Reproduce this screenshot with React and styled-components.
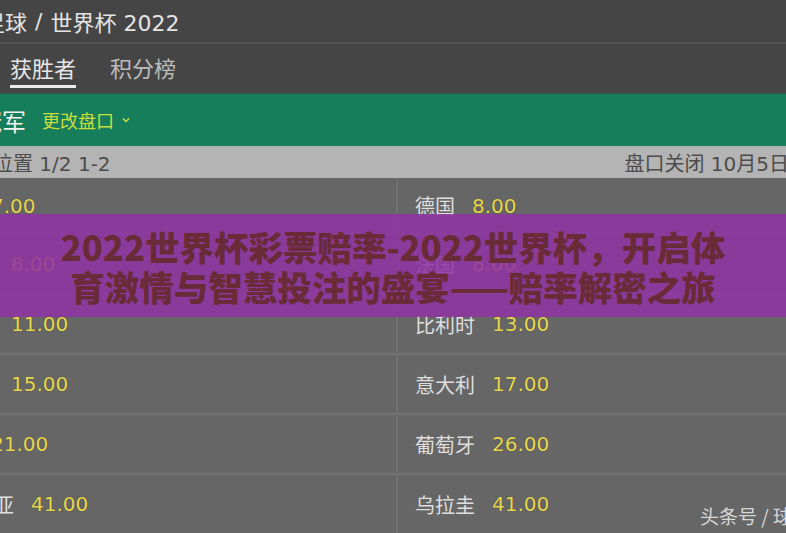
import React from 'react';
import styled, { createGlobalStyle } from 'styled-components';

const GlobalStyle = createGlobalStyle`
body {
    margin: 0;
    background: #666;
    overflow: hidden;
}
`

const Frame = styled.div`
position: relative;
width: 786px;
height: 533px;
overflow: hidden;
background-color: #666;
font-family: "DejaVu Sans", "Noto Sans CJK SC", sans-serif;
`

// a tela e mais larga que a janela, as bordas ficam cortadas
const Board = styled.div`
margin-left: -83px;
width: 889px;
`

const TopBar = styled.div`
display: flex;
align-items: center;
height: 42px;
padding-left: 66px;
background-color: #454545;
border-bottom: 2px solid #525252;
color: #e4e4e4;
font-size: 22px;
white-space: nowrap;

span {
    margin: 0 8px;
}
`

const Tabs = styled.div`
display: flex;
align-items: flex-start;
gap: 34px;
height: 49px;
padding-left: 93px;
background-color: #454545;
box-sizing: border-box;
`

const Tab = styled.div`
display: flex;
align-items: center;
height: 44px;
padding-top: 4px;
box-sizing: border-box;
font-family: "Noto Sans CJK SC", sans-serif;
font-size: 22px;
color: ${props => props.ativo ? '#e6e6e6' : '#bcbcbc'};
border-bottom: 3px solid ${props => props.ativo ? '#ececec' : 'transparent'};
`

const GreenBar = styled.div`
display: flex;
align-items: center;
gap: 16px;
height: 52px;
padding-left: 61px;
background-color: #177e5c;
border-top: 1px solid #2d5c48;
font-family: "Noto Sans CJK SC", sans-serif;
`

const Titulo = styled.div`
font-size: 24px;
color: #f2f2f2;
`

const MudarLinha = styled.div`
display: flex;
align-items: center;
gap: 8px;
font-size: 18px;
color: #c9de3e;
`

const InfoBar = styled.div`
display: flex;
justify-content: space-between;
align-items: center;
height: 32px;
padding: 0 17px 0 36px;
background-color: #b4b4b4;
color: #4c4c4c;
font-size: 20px;
white-space: nowrap;
`

const Linha = styled.div`
display: grid;
grid-template-columns: 481px 1fr;
height: 60px;
border-top: 2px solid #727272;
box-sizing: border-box;

&:first-child {
    height: 55px;
    border-top: none;
}
`

const Celula = styled.div`
display: flex;
align-items: center;
gap: 17px;
padding-left: 17px;
border-right: ${props => props.esquerda ? '2px solid #707070' : 'none'};
white-space: nowrap;
`

const Nome = styled.span`
font-family: "Noto Sans CJK SC", sans-serif;
font-size: 20px;
color: #dedede;
`

const Odd = styled.span`
font-size: 20px;
color: #e6d752;
text-shadow: 0 0 1px rgba(60, 50, 0, 0.7);
`

const Faixa = styled.div`
position: absolute;
top: 214px;
left: 0;
right: 0;
height: 103px;
display: flex;
flex-direction: column;
justify-content: center;
align-items: center;
background-color: rgba(144, 52, 162, 0.87);
color: #6a2b38;
font-family: "Noto Sans CJK SC", sans-serif;
font-weight: 900;
font-size: 34.5px;
line-height: 40px;
text-align: center;
white-space: nowrap;
`

const MarcaDagua = styled.div`
position: absolute;
left: 700px;
top: 502px;
font-family: "Noto Sans CJK SC", sans-serif;
font-size: 19px;
color: rgba(236, 236, 236, 0.85);
white-space: nowrap;
`

const odds = [
    ['巴西', '7.00', '德国', '8.00'],
    ['西班牙', '8.00', '法国', '8.00'],
    ['阿根廷', '11.00', '比利时', '13.00'],
    ['英格兰', '15.00', '意大利', '17.00'],
    ['荷兰', '21.00', '葡萄牙', '26.00'],
    ['哥伦比亚', '41.00', '乌拉圭', '41.00'],
]

export default class App extends React.Component {
    render() {
        const linhas = odds.map((item) => {
            return (
                <Linha key={item[0]}>
                    <Celula esquerda>
                        <Nome>{item[0]}</Nome>
                        <Odd>{item[1]}</Odd>
                    </Celula>
                    <Celula>
                        <Nome>{item[2]}</Nome>
                        <Odd>{item[3]}</Odd>
                    </Celula>
                </Linha>
            )
        })

        return (
            <Frame>
                <GlobalStyle />
                <Board>
                    <TopBar>足球<span>/</span>世界杯 2022</TopBar>
                    <Tabs>
                        <Tab ativo>获胜者</Tab>
                        <Tab>积分榜</Tab>
                    </Tabs>
                    <GreenBar>
                        <Titulo>冠军</Titulo>
                        <MudarLinha>
                            更改盘口
                            <svg width="8" height="6" viewBox="0 0 8 6">
                                <path d="M1 1.5 L4 4.5 L7 1.5" fill="none" stroke="#c9de3e" strokeWidth="1.5" />
                            </svg>
                        </MudarLinha>
                    </GreenBar>
                    <InfoBar>
                        <span>每向位置 1/2 1-2</span>
                        <span>盘口关闭 10月5日</span>
                    </InfoBar>
                    <div>{linhas}</div>
                </Board>
                <Faixa>
                    2022世界杯彩票赔率-2022世界杯，开启体
                    <br />
                    育激情与智慧投注的盛宴——赔率解密之旅
                </Faixa>
                <MarcaDagua>头条号 / 球迷</MarcaDagua>
            </Frame>
        )
    }
}
